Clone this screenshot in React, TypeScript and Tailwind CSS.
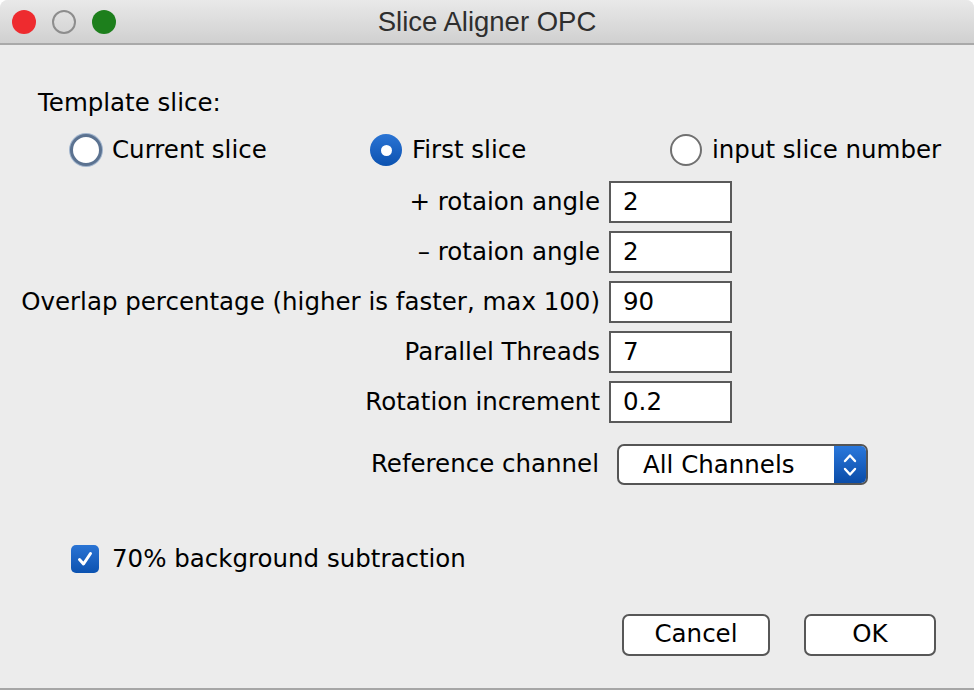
import React from 'react';

const font = { fontFamily: '"DejaVu Sans", "Liberation Sans", sans-serif' };

const Radio = ({ checked, focus, label }: { checked?: boolean; focus?: boolean; label: string }) => (
  <div className="flex items-center">
    {checked ? (
      <span className="flex h-[32px] w-[32px] items-center justify-center rounded-full bg-gradient-to-b from-[#2a74d4] to-[#0b52b0]">
        <span className="h-[11px] w-[11px] rounded-full bg-white" />
      </span>
    ) : focus ? (
      <span className="h-[32px] w-[32px] rounded-full border-[3px] border-[#5b7290] bg-white shadow-[0_0_0_1px_#9fb3cc]" />
    ) : (
      <span className="h-[32px] w-[32px] rounded-full border-2 border-[#707070] bg-white" />
    )}
    <span className="ml-[10px] text-[24.5px] text-black">{label}</span>
  </div>
);

const Field = ({ label, value }: { label: string; value: string }) => (
  <div className="flex h-[42px] items-center">
    <div className="w-[600px] text-right text-[24.5px] text-black">{label}</div>
    <div className="ml-[9px] flex h-[42px] w-[123px] items-center border-2 border-[#5a5a5a] bg-white pl-[12px] text-[24.5px] text-black">
      {value}
    </div>
  </div>
);

const App: React.FC = () => {
  return (
    <div className="h-[692px] w-[976px] overflow-hidden bg-white" style={font}>
      <div className="h-[690px] w-[974px] overflow-hidden rounded-t-[8px] border-b-2 border-[#a6a6a6] bg-[#ececec]">
        {/* title bar */}
        <div className="grid h-[45px] grid-cols-[1fr_auto_1fr] items-center border-b-2 border-[#a9a9a9] bg-gradient-to-b from-[#e9e9e9] to-[#d0d0d0]">
          <div className="flex items-center gap-[16px] pl-[12px]">
            <span className="h-[24px] w-[24px] rounded-full bg-[#ee2b2f]" />
            <span className="h-[24px] w-[24px] rounded-full border-2 border-[#8d8d8d]" />
            <span className="h-[24px] w-[24px] rounded-full bg-[#1d7f1c]" />
          </div>
          <div
            className="text-[27.5px] text-[#2e2e2e]"
            style={{ fontFamily: '"Liberation Sans", "DejaVu Sans", sans-serif' }}
          >
            Slice Aligner OPC
          </div>
          <div />
        </div>

        {/* body */}
        <div className="pt-[43px]">
          <div className="pl-[38px] text-[24.5px] leading-[30px] text-black">Template slice:</div>
          <div className="mt-[13px] ml-[70px] grid h-[38px] w-[900px] grid-cols-3 items-center">
            <Radio focus label="Current slice" />
            <Radio checked label="First slice" />
            <Radio label="input slice number" />
          </div>

          <div className="mt-[12px] flex flex-col gap-[8px]">
            <Field label="+ rotaion angle" value="2" />
            <Field label="– rotaion angle" value="2" />
            <Field label="Overlap percentage (higher is faster, max 100)" value="90" />
            <Field label="Parallel Threads" value="7" />
            <Field label="Rotation increment" value="0.2" />
          </div>

          <div className="mt-[21px] flex h-[41px] items-center">
            <div className="w-[599px] text-right text-[24.5px] text-black">Reference channel</div>
            <div className="ml-[18px] flex h-[41px] w-[251px] overflow-hidden rounded-[7px] border-2 border-[#555] bg-white">
              <div className="flex flex-1 items-center pl-[24px] pt-[2px] text-[24.5px] text-black">All Channels</div>
              <div className="flex w-[32px] items-center justify-center bg-gradient-to-b from-[#2a78dc] to-[#0a4ca8]">
                <svg width="16" height="28" viewBox="0 0 16 28" fill="none" stroke="white" strokeWidth="2.4" strokeLinecap="round" strokeLinejoin="round">
                  <path d="M3 10 L8 4.5 L13 10" />
                  <path d="M3 18 L8 23.5 L13 18" />
                </svg>
              </div>
            </div>
          </div>

          <div className="mt-[56px] flex items-center pl-[71px]">
            <span className="flex h-[28px] w-[28px] items-center justify-center rounded-[5px] bg-gradient-to-b from-[#2a74d4] to-[#0b52b0]">
              <svg width="18" height="18" viewBox="0 0 18 18" fill="none" stroke="white" strokeWidth="3" strokeLinecap="round" strokeLinejoin="round">
                <path d="M3.5 9.5 L7.5 14 L14.5 3.5" />
              </svg>
            </span>
            <span className="ml-[13px] text-[24.5px] text-black">70% background subtraction</span>
          </div>

          <div className="mt-[36px] flex pl-[622px]">
            <button className="flex h-[42px] w-[148px] items-center justify-center rounded-[7px] border-2 border-[#575757] bg-white text-[24.5px] text-black">
              Cancel
            </button>
            <button className="ml-[34px] flex h-[42px] w-[132px] items-center justify-center rounded-[7px] border-2 border-[#575757] bg-white text-[24.5px] text-black">
              OK
            </button>
          </div>
        </div>
      </div>
    </div>
  );
};

export default App;
